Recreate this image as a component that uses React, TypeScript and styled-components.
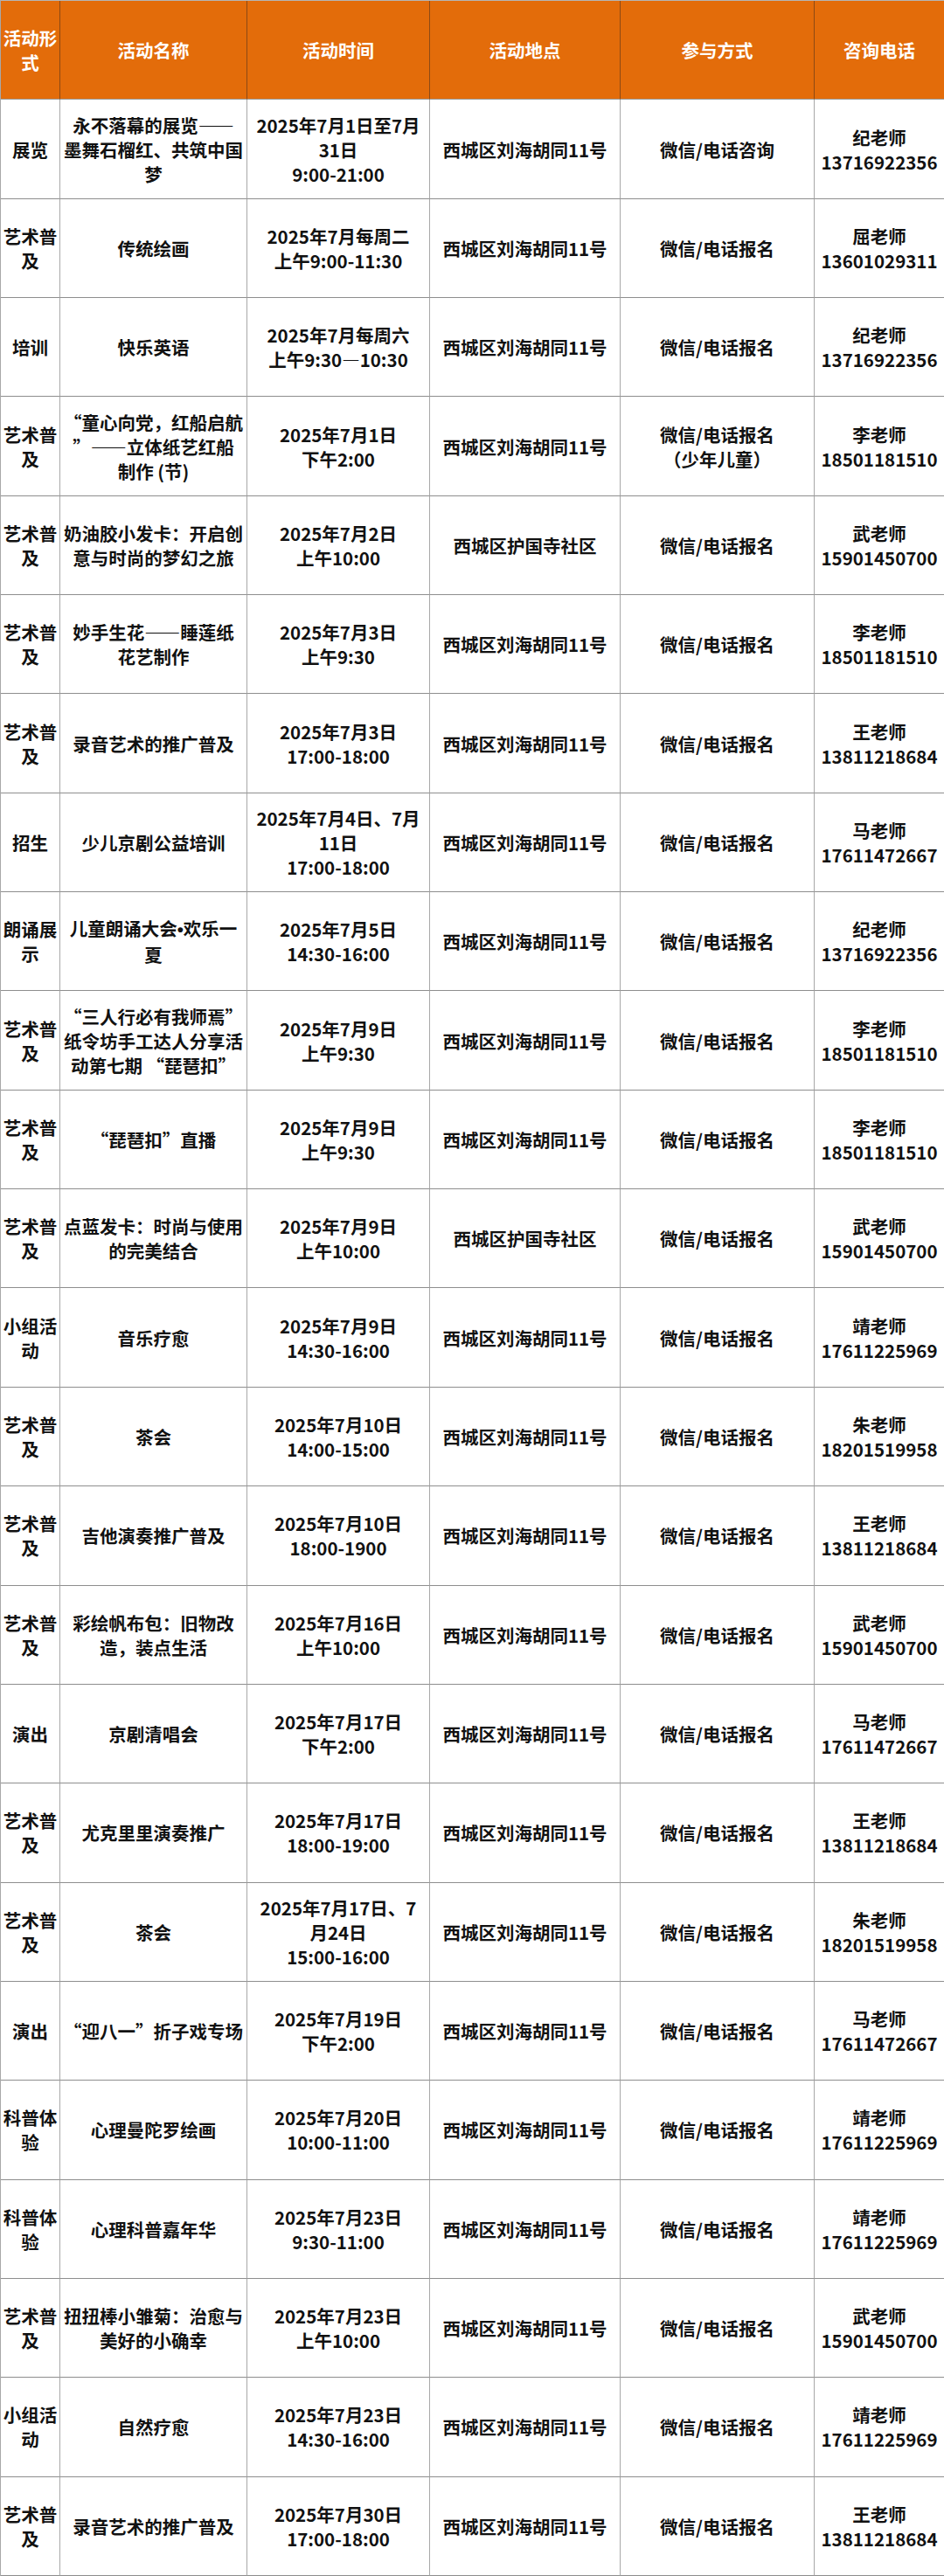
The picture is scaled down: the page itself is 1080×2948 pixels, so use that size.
import React from "react";
import styled, { createGlobalStyle } from "styled-components";

type Row = [string, React.ReactNode, string, string, string, string];

const LIUHAI = "西城区刘海胡同11号";
const HUGUO = "西城区护国寺社区";
const SIGN = "微信/电话报名";

const headers = ["活动形式", "活动名称", "活动时间", "活动地点", "参与方式", "咨询电话"];

const Dot = styled.span`
  font-family: "Liberation Sans", sans-serif;
  font-weight: 700;
`;

const rows: Row[] = [
  ["展览", "永不落幕的展览——\n墨舞石榴红、共筑中国\n梦", "2025年7月1日至7月\n31日\n9:00-21:00", LIUHAI, "微信/电话咨询", "纪老师\n13716922356"],
  ["艺术普及", "传统绘画", "2025年7月每周二\n上午9:00-11:30", LIUHAI, SIGN, "屈老师\n13601029311"],
  ["培训", "快乐英语", "2025年7月每周六\n上午9:30—10:30", LIUHAI, SIGN, "纪老师\n13716922356"],
  ["艺术普及", "“童心向党，红船启航\n”——立体纸艺红船\n制作 (节)", "2025年7月1日\n下午2:00", LIUHAI, "微信/电话报名\n（少年儿童）", "李老师\n18501181510"],
  ["艺术普及", "奶油胶小发卡：开启创\n意与时尚的梦幻之旅", "2025年7月2日\n上午10:00", HUGUO, SIGN, "武老师\n15901450700"],
  ["艺术普及", "妙手生花——睡莲纸\n花艺制作", "2025年7月3日\n上午9:30", LIUHAI, SIGN, "李老师\n18501181510"],
  ["艺术普及", "录音艺术的推广普及", "2025年7月3日\n17:00-18:00", LIUHAI, SIGN, "王老师\n13811218684"],
  ["招生", "少儿京剧公益培训", "2025年7月4日、7月\n11日\n17:00-18:00", LIUHAI, SIGN, "马老师\n17611472667"],
  ["朗诵展示", <>儿童朗诵大会<Dot>•</Dot>欢乐一{"\n"}夏</>, "2025年7月5日\n14:30-16:00", LIUHAI, SIGN, "纪老师\n13716922356"],
  ["艺术普及", "“三人行必有我师焉”\n纸令坊手工达人分享活\n动第七期 “琵琶扣”", "2025年7月9日\n上午9:30", LIUHAI, SIGN, "李老师\n18501181510"],
  ["艺术普及", "“琵琶扣”直播", "2025年7月9日\n上午9:30", LIUHAI, SIGN, "李老师\n18501181510"],
  ["艺术普及", "点蓝发卡：时尚与使用\n的完美结合", "2025年7月9日\n上午10:00", HUGUO, SIGN, "武老师\n15901450700"],
  ["小组活动", "音乐疗愈", "2025年7月9日\n14:30-16:00", LIUHAI, SIGN, "靖老师\n17611225969"],
  ["艺术普及", "茶会", "2025年7月10日\n14:00-15:00", LIUHAI, SIGN, "朱老师\n18201519958"],
  ["艺术普及", "吉他演奏推广普及", "2025年7月10日\n18:00-1900", LIUHAI, SIGN, "王老师\n13811218684"],
  ["艺术普及", "彩绘帆布包：旧物改\n造，装点生活", "2025年7月16日\n上午10:00", LIUHAI, SIGN, "武老师\n15901450700"],
  ["演出", "京剧清唱会", "2025年7月17日\n下午2:00", LIUHAI, SIGN, "马老师\n17611472667"],
  ["艺术普及", "尤克里里演奏推广", "2025年7月17日\n18:00-19:00", LIUHAI, SIGN, "王老师\n13811218684"],
  ["艺术普及", "茶会", "2025年7月17日、7\n月24日\n15:00-16:00", LIUHAI, SIGN, "朱老师\n18201519958"],
  ["演出", "“迎八一”折子戏专场", "2025年7月19日\n下午2:00", LIUHAI, SIGN, "马老师\n17611472667"],
  ["科普体验", "心理曼陀罗绘画", "2025年7月20日\n10:00-11:00", LIUHAI, SIGN, "靖老师\n17611225969"],
  ["科普体验", "心理科普嘉年华", "2025年7月23日\n9:30-11:00", LIUHAI, SIGN, "靖老师\n17611225969"],
  ["艺术普及", "扭扭棒小雏菊：治愈与\n美好的小确幸", "2025年7月23日\n上午10:00", LIUHAI, SIGN, "武老师\n15901450700"],
  ["小组活动", "自然疗愈", "2025年7月23日\n14:30-16:00", LIUHAI, SIGN, "靖老师\n17611225969"],
  ["艺术普及", "录音艺术的推广普及", "2025年7月30日\n17:00-18:00", LIUHAI, SIGN, "王老师\n13811218684"],
];

const GlobalStyle = createGlobalStyle`
  body {
    margin: 0;
    background: #ffffff;
  }
`;

const Sheet = styled.div`
  display: grid;
  grid-template-columns: 68px 214px 209px 218px 222px 149px;
  grid-template-rows: repeat(26, 1fr);
  width: 1080px;
  height: 2948px;
  box-sizing: border-box;
  border-top: 1px solid #b5b5b5;
  border-left: 1px solid #a8a8a8;
  font-family: "Noto Sans CJK SC", "Noto Sans", sans-serif;
  font-weight: 700;
  font-size: 20.5px;
  line-height: 28px;
`;

const Cell = styled.div<{ $head?: boolean }>`
  display: flex;
  align-items: center;
  justify-content: center;
  box-sizing: border-box;
  min-width: 0;
  padding: 0 2px;
  text-align: center;
  white-space: pre-line;
  background: ${(p) => (p.$head ? "#e36c0a" : "#ffffff")};
  color: ${(p) => (p.$head ? "#ffffff" : "#111111")};
  border-right: 1px solid ${(p) => (p.$head ? "#8d4a14" : "#a8a8a8")};
  border-bottom: 1px solid ${(p) => (p.$head ? "#9a9a9a" : "#8e8e8e")};
`;

const CellText = styled.span`
  display: block;
`;

export default function App() {
  return (
    <>
      <GlobalStyle />
      <Sheet lang="zh-CN">
        {headers.map((h) => (
          <Cell $head key={h}>
            {h}
          </Cell>
        ))}
        {rows.map((row, i) =>
          row.map((text, j) => (
            <Cell key={`${i}-${j}`}>
              <CellText>{text}</CellText>
            </Cell>
          ))
        )}
      </Sheet>
    </>
  );
}
